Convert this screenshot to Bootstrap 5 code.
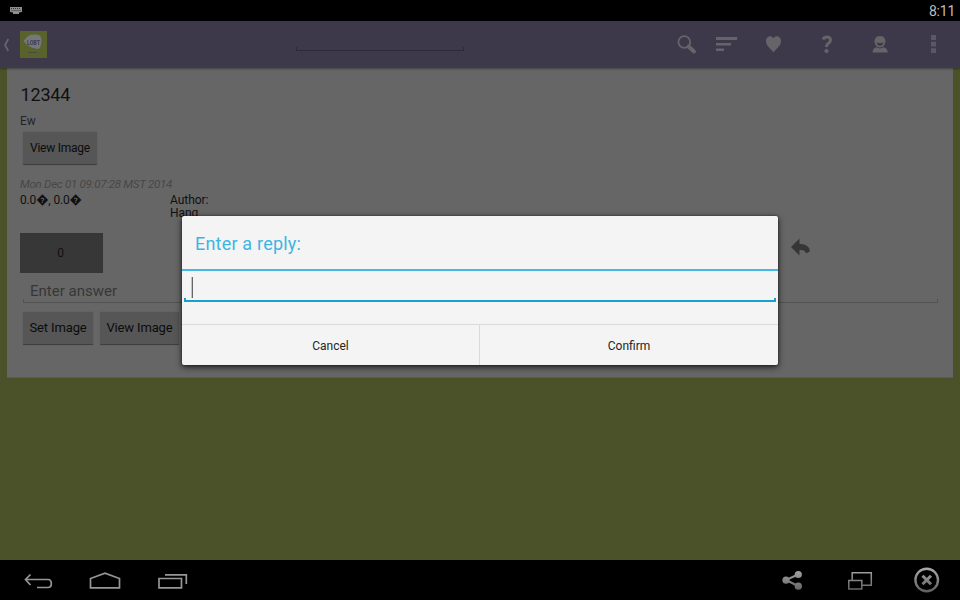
<!DOCTYPE html>
<html lang="en">
<head>
<meta charset="utf-8">
<meta name="viewport" content="width=device-width, initial-scale=1">
<title>Reply</title>
<link href="https://cdn.jsdelivr.net/npm/bootstrap@5.3.0/dist/css/bootstrap.min.css" rel="stylesheet">
<style>
  body { font-family: Roboto, sans-serif; font-size: 12px; line-height: 14px; color: #101010; background: #4b5229; height: 600px; }
  svg { display: block; flex: none; }
  .status { height: 21px; background: #000; color: #bebebe; font-size: 14px; padding: 0 5px 0 10px; }
  .clock { letter-spacing: -.25px; }
  .appbar { height: 47px; background: #3d384a; box-shadow: 0 1px 2px rgba(0,0,0,.35); padding-left: 3px; z-index: 1; }
  .logo { width: 27px; height: 27px; background: #59622a; margin-left: 10px; }
  .tick-line { border: 1px solid #2d2937; border-top: 0; height: 4px; }
  .search-line { width: 168px; margin-left: 249px; }
  .tools { margin-left: auto; }
  .post { margin: 0 7px; height: 309px; padding: 16px 13px 0; background: #666; box-shadow: 0 1px 0 #5a5e44; }
  .post-title { font-size: 18px; line-height: 22px; letter-spacing: -.2px; padding-left: .6px; }
  .btn-holo { background: #565656; border: 0; border-bottom: 1px solid #3f3f3f; border-radius: 1px; height: 33px; padding: 0; font-size: 12px; line-height: 32px; color: #0c0c0c; box-shadow: 0 0 1px #444; white-space: nowrap; }
  .w-first { width: 74px; letter-spacing: -.24px; margin-left: 3px; padding-top: 1px; line-height: 31px; } .w-set { width: 70px; letter-spacing: -.12px; } .w-view { width: 79px; letter-spacing: -.15px; }
  .btn-lg-text { font-size: 13px; }
  .stamp { color: #474747; font-style: italic; font-size: 11.5px; letter-spacing: -.25px; }
  .meta-row { margin-top: 3px; height: 30px; margin-bottom: 9px; }
  .coords { width: 150px; line-height: 12px; height: 14px; letter-spacing: -.15px; }
  .author { line-height: 13px; letter-spacing: -.05px; }
  .votes { width: 83px; height: 40px; background: #373737; padding-right: 2px; }
  .answer { height: 30px; margin: 0 3px; width: 915px; color: #373737; font-size: 15px; line-height: 36px; padding-left: 7px; }
  .answer-line { border-color: #525252; margin: -4px 3px 0; width: 915px; height: 4px; }
  .reply-buttons { gap: 7px; margin: 9px 0 0 3px; }
  .reply-arrow { margin: 5px 0 0 688px; }
  .dialog { left: 182px; top: 216px; width: 596px; height: 149px; background: #f4f4f4; border-radius: 2px; box-shadow: 0 2px 6px rgba(0,0,0,.75), 0 0 2px rgba(0,0,0,.5); z-index: 5; }
  .dialog-title { height: 55px; border-bottom: 2px solid #43b8e4; color: #3eb4e3; font-size: 18px; letter-spacing: .2px; padding-left: 13px; padding-top: 2px; }
  .field { height: 31px; margin: 0 2px; padding: 6px 0 0 7px; }
  .caret { width: 1px; height: 21px; margin-left: 1px; background: #666; box-shadow: -1px 0 0 #c4c4c4; }
  .field-line { height: 4px; margin: -4px 2px 0; border: 2px solid #16a0d2; border-top: 0; }
  .dialog-actions { height: 41px; border-top: 1px solid #dadada; margin-top: auto; }
  .dialog-actions button { font-size: 12px; border: 0; background: none; color: #252525; padding: 1px 0 0; }
  .dialog-actions button:first-child { border-right: 1px solid #dadada; width: 298px; }
  .sysbar { height: 40px; background: #000; padding: 0 20px; }
</style>
<script src="https://cdn.jsdelivr.net/npm/bootstrap@5.3.0/dist/js/bootstrap.bundle.min.js"></script>
</head>
<body class="d-flex flex-column overflow-hidden position-relative">
<div class="status d-flex align-items-center justify-content-between">
  <svg width="12" height="8" viewBox="0 0 12 8"><path d="M0 0H12V5L9 5.500V7H3V5.500L0 5Z" fill="#8e8e8e"/><path d="M1 1.500H11M1.500 3.500H10.500" stroke="#333" stroke-dasharray="1 1"/></svg>
  <span class="clock">8:11</span>
</div>
<header class="appbar d-flex align-items-center">
  <svg width="7" height="14" viewBox="0 0 7 14"><path d="M5.300 1L2 7L5.300 13" fill="none" stroke="#66626e" stroke-width="1.800"/></svg>
  <div class="logo"><svg width="27" height="27" viewBox="0 0 27 27"><path d="M3.500 10L8 5Q14 2.500 20 4.500Q22 7 21.300 12Q20.500 17.500 18 18Q12 17.500 7 14Z" fill="#77777b"/><text x="7" y="13.800" font-family="Roboto, sans-serif" font-size="8" font-weight="bold" fill="#3d3a4e" textLength="13" lengthAdjust="spacingAndGlyphs">LOBT</text><path d="M8 21.500H17" stroke="#3f4548" stroke-dasharray="2 .5"/></svg></div>
  <div class="tick-line search-line mt-2"></div>
  <div class="tools">
    <svg width="287" height="47" viewBox="673 0 287 47">
      <g fill="#666469">
        <circle cx="684.300" cy="21" r="5.900" fill="none" stroke="#666469" stroke-width="1.800"/>
        <path d="M688.500 25.500L694 30.500" stroke="#666469" stroke-width="4" stroke-linecap="round"/>
        <path d="M716 16H737.500L736.800 19H716ZM716 22H731V24.500H716ZM716 27.500H724V30H716Z"/>
        <path d="M773.500 31.500C771.500 28 766 25 766 20.500C766 14.500 772 14 773.500 17.500C775 14 781 14.500 781 20.500C781 25 775.500 28 773.500 31.500Z"/>
        <path d="M823 18.500Q824 16 827 16Q830.500 16 830.500 19Q830.500 21 828.500 22.200Q826.500 23.300 826.500 26" fill="none" stroke="#666469" stroke-width="3"/><circle cx="826.500" cy="30" r="2.100"/>
        <path d="M880 15C888 15 886.500 26.500 880 26.500C873.500 26.500 872 15 880 15ZM872.500 31.500Q873 26.700 876.500 26.300Q880 28.500 883.500 26.300Q887 26.700 887.800 31.500Z"/>
        <path d="M876.500 21.500Q880 22.500 883.500 21.500Q882.500 24.800 880 24.800Q877.500 24.800 876.500 21.500Z" fill="#3d384a"/>
        <path d="M931 14H936V19H931ZM931 20.700H936V25.500H931ZM931 27.300H936V32H931Z" fill="#5b5763"/>
      </g>
    </svg>
  </div>
</header>
<main class="flex-grow-1">
  <section class="post">
    <h1 class="post-title fw-normal m-0">12344</h1>
    <p class="mb-0 mt-2 pb-1 text-dark">Ew</p>
    <button class="btn btn-holo w-first d-block">View Image</button>
    <p class="stamp mb-0 mt-2 pt-1">Mon Dec 01 09:07:28 MST 2014</p>
    <div class="meta-row d-flex"><span class="coords">0.0�, 0.0�</span><span class="author">Author:<br>Hang</span></div>
    <div class="d-flex align-items-start">
      <div class="votes d-flex align-items-center justify-content-center">0</div>
      <svg class="reply-arrow" width="19" height="18" viewBox="0 0 19 18"><path d="M0 9L8.500 .5V6C15 6 18.800 8.500 18.800 13.500L15 15.500Q14.500 11.500 8.500 12V17.500Z" fill="#363636"/></svg>
    </div>
    <div class="answer">Enter answer</div>
    <div class="tick-line answer-line"></div>
    <div class="reply-buttons d-flex"><button class="btn btn-holo btn-lg-text w-set">Set Image</button><button class="btn btn-holo btn-lg-text w-view">View Image</button></div>
  </section>
</main>
<div class="dialog position-absolute d-flex flex-column" role="dialog" aria-label="Enter a reply">
  <div class="dialog-title d-flex align-items-center">Enter a reply:</div>
  <div class="field"><div class="caret"></div></div>
  <div class="field-line"></div>
  <div class="dialog-actions d-flex"><button>Cancel</button><button class="flex-grow-1">Confirm</button></div>
</div>
<footer class="sysbar d-flex align-items-center justify-content-between">
  <svg width="170" height="40" viewBox="20 0 170 40" fill="none" stroke="#969696" stroke-width="1.700">
    <path d="M30.500 14.500L25.500 19.500L30.500 25M25.500 19.500H48Q51.300 19.500 51.300 23.500Q51.300 27.500 48 27.500H37"/>
    <path d="M90.500 27.800V18.500L105 13.200L119.500 18.500V27.800Z"/>
    <path d="M159 18.500H181.500V27.800H159ZM165 14.800H186.300V24"/>
  </svg>
  <svg width="160" height="40" viewBox="780 0 160 40" fill="none">
    <defs><linearGradient id="metal" x1="0" y1="8" x2="0" y2="32" gradientUnits="userSpaceOnUse"><stop stop-color="#aaa"/><stop offset="1" stop-color="#606060"/></linearGradient></defs>
    <path d="M798 14.500L786 20L798 26" stroke="url(#metal)" stroke-width="2"/>
    <g fill="url(#metal)"><circle cx="786" cy="20.200" r="3.600"/><circle cx="798.300" cy="14.500" r="3.600"/><circle cx="798.300" cy="26.200" r="3.600"/></g>
    <path d="M852.200 20V12.700H871.300V25.300H862M848.800 20.500H861.800V29H848.800Z" stroke="url(#metal)" stroke-width="1.500"/>
    <circle cx="926.700" cy="20" r="11.300" stroke="url(#metal)" stroke-width="2.400"/>
    <path d="M922.500 15.800L931 24.300M931 15.800L922.500 24.300" stroke="url(#metal)" stroke-width="3"/>
  </svg>
</footer>
</body>
</html>
